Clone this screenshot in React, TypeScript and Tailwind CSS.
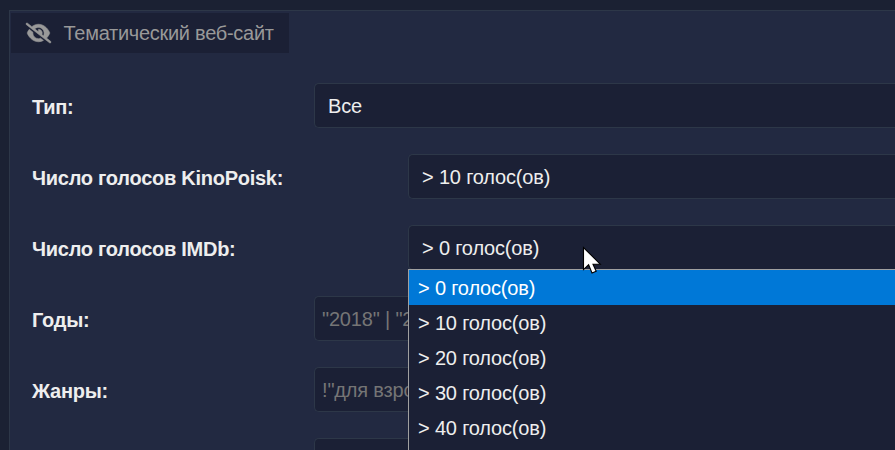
import { FaEyeSlash } from "react-icons/fa6";

type Row = { label: string; value?: string; placeholder?: string; narrow?: boolean };

const rows: Row[] = [
  { label: "Тип:", value: "Все" },
  { label: "Число голосов KinoPoisk:", value: "> 10 голос(ов)", narrow: true },
  { label: "Число голосов IMDb:", value: "> 0 голос(ов)", narrow: true },
  { label: "Годы:", placeholder: "\"2018\" | \"2" },
  { label: "Жанры:", placeholder: "!\"для взро" },
  { label: "", placeholder: "" },
];

const options = ["> 0 голос(ов)", "> 10 голос(ов)", "> 20 голос(ов)", "> 30 голос(ов)", "> 40 голос(ов)"];

function Field({ row }: { row: Row }) {
  return (
    <div className="flex h-[45px] shrink-0 items-stretch">
      <div className={`flex shrink-0 items-center pt-[3px] pl-[22px] font-bold tracking-[-0.27px] text-[#eeeeee] ${row.narrow ? "w-[398px]" : "w-[304px]"}`}>
        {row.label}
      </div>
      <div
        className={`flex flex-1 items-center rounded-l-[5px] border border-r-0 border-[#2d3748] bg-[#1b2035] tracking-[-0.18px] ${
          row.value ? "pl-[13px] text-[#eeeeee]" : "pl-[7px] text-[#757575]"
        }`}
      >
        {row.value ?? row.placeholder}
      </div>
    </div>
  );
}

function Dropdown() {
  return (
    <div className="absolute top-[269px] left-[408px] h-[181px] w-[487px] overflow-hidden border-t border-l border-[#a0a0a0] bg-[#1b2035] tracking-[-0.18px] text-[#eeeeee]">
      {options.map((option, i) => (
        <div key={option} className={`flex h-[35px] items-center pl-[9px] ${i === 0 ? "bg-[#0078d7] text-white" : ""}`}>
          {option}
        </div>
      ))}
    </div>
  );
}

export default function App() {
  return (
    <div className="relative h-[450px] w-[895px] overflow-hidden bg-[#1b2133] pt-[10px] pl-[9px] font-['Liberation_Sans',Arial,sans-serif] text-[20px] leading-[24px] whitespace-nowrap">
      <div className="flex h-[460px] flex-col border-t border-l border-[#2d3748] bg-[#222941] pt-[2px]">
        <div className="ml-px flex h-[40px] w-[278px] shrink-0 items-center bg-[#1b2035] pl-[15px] text-[#999999]">
          <FaEyeSlash className="h-[20px] w-[25px] overflow-visible stroke-current stroke-[14px]" />
          <span className="ml-[12.5px] tracking-[-0.28px]">Тематический веб-сайт</span>
        </div>
        <div className="mt-[30px] flex flex-col gap-[26px]">
          {rows.map((row) => (
            <Field key={row.label} row={row} />
          ))}
        </div>
      </div>
      <Dropdown />
      <svg className="absolute top-[246px] left-[582px]" width="20" height="30" viewBox="0 0 20 30">
        <path d="M1.5 1.5V23.6L6.6 18.8L10 27L14.2 25.2L11 18.2H18.2Z" fill="#fff" stroke="#000" strokeWidth="1.1" />
      </svg>
    </div>
  );
}
